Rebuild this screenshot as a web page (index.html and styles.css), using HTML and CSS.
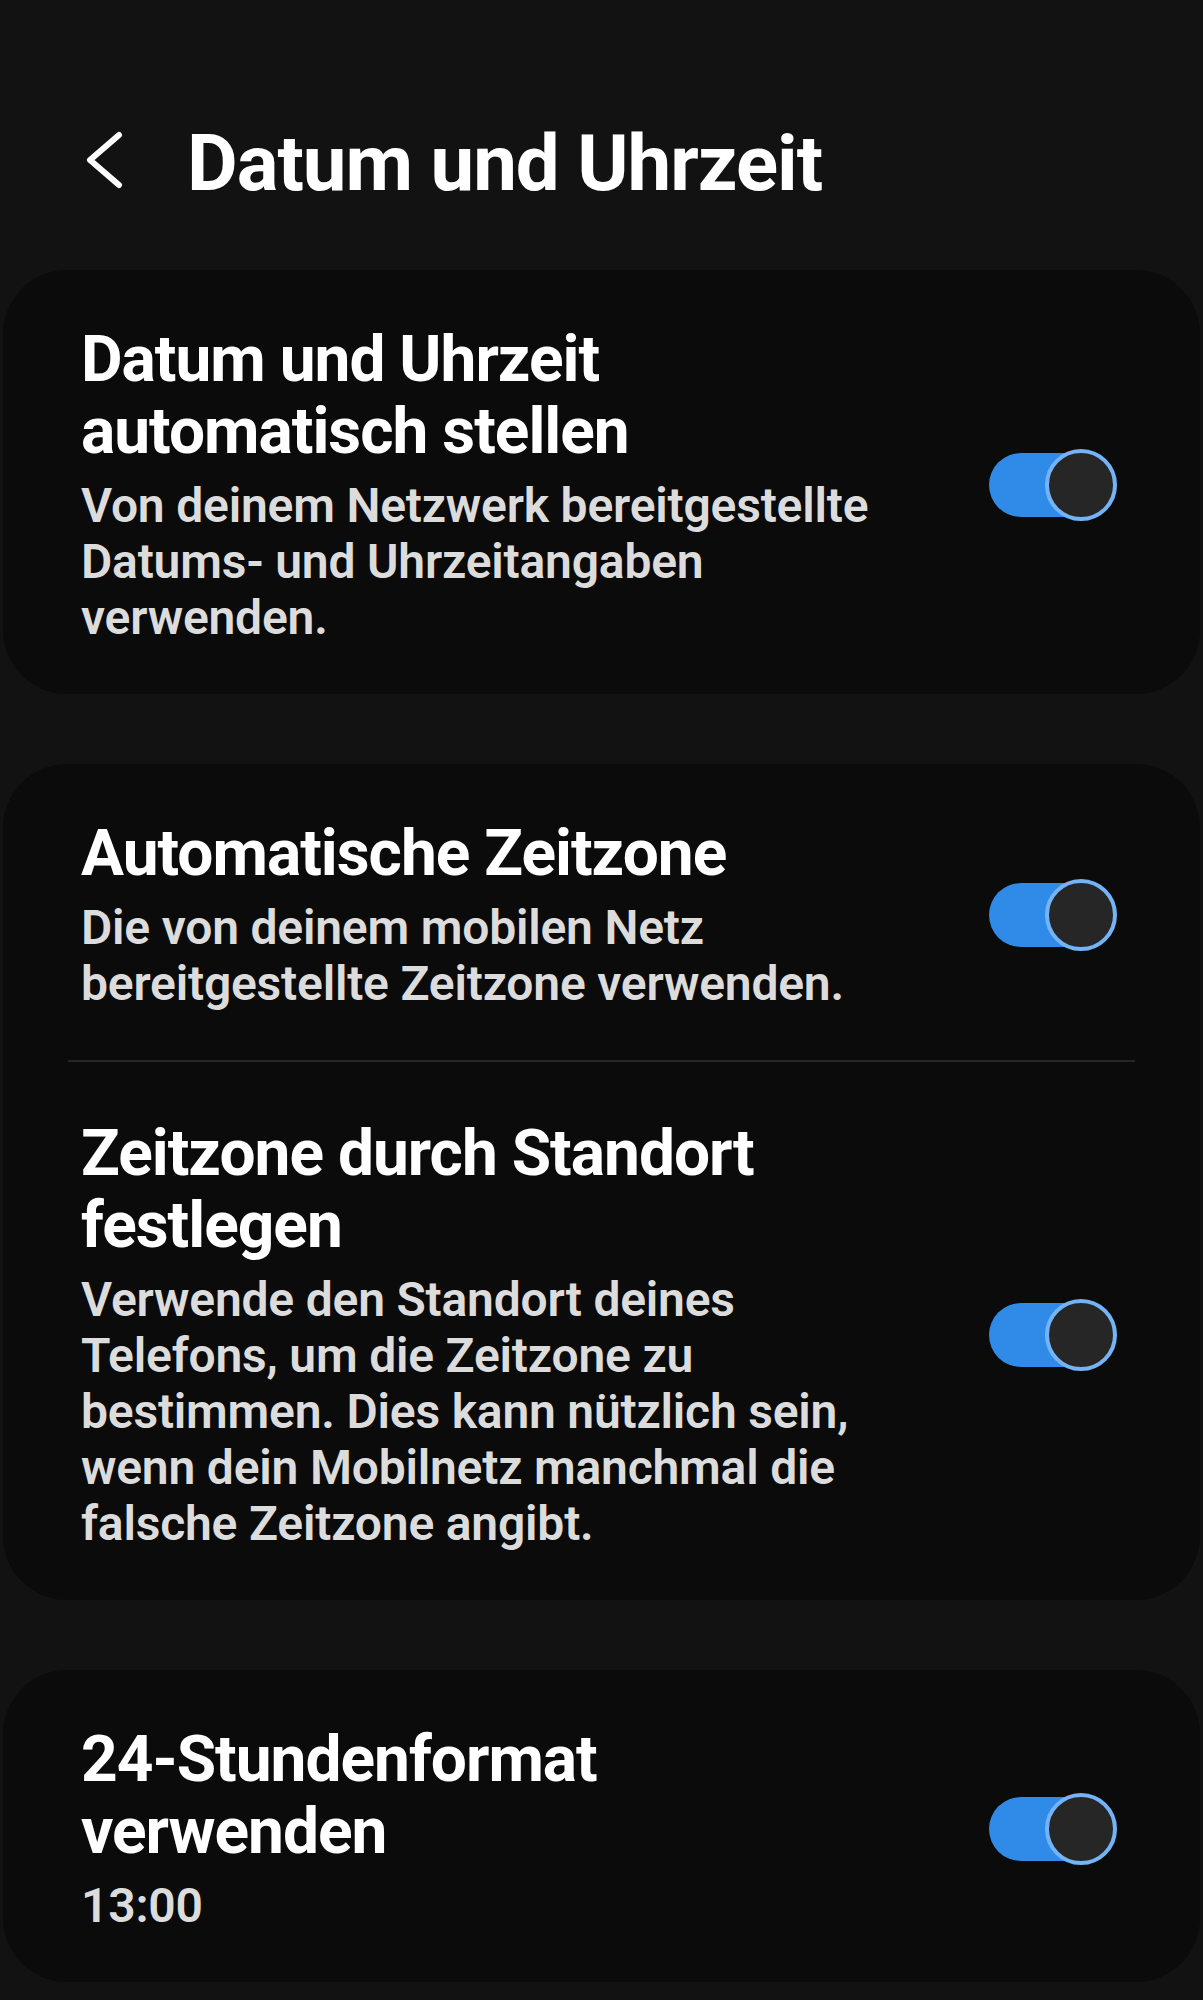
FILE: index.html
```html
<!DOCTYPE html>
<html lang="de">
<head>
  <meta charset="UTF-8">
  <meta name="viewport" content="width=device-width, initial-scale=1.0">
  <title>Datum und Uhrzeit</title>
  <link rel="stylesheet" href="styles.css">
</head>
<body>
  <header class="topbar">
    <svg class="back" viewBox="0 0 40 60" width="40" height="60">
      <path d="M34 5 L5 30 L34 55" fill="none" stroke="#fff" stroke-width="6" stroke-linecap="round" stroke-linejoin="round"/>
    </svg>
    <h1>Datum und Uhrzeit</h1>
  </header>

  <section class="card">
    <div class="row">
      <div class="text">
        <h2>Datum und Uhrzeit automatisch stellen</h2>
        <p>Von deinem Netzwerk bereitgestellte Datums- und Uhrzeitangaben verwenden.</p>
      </div>
      <span class="switch"><span class="knob"></span></span>
    </div>
  </section>

  <section class="card">
    <div class="row">
      <div class="text">
        <h2>Automatische Zeitzone</h2>
        <p>Die von deinem mobilen Netz bereitgestellte Zeitzone verwenden.</p>
      </div>
      <span class="switch"><span class="knob"></span></span>
    </div>
    <div class="divider"></div>
    <div class="row">
      <div class="text">
        <h2>Zeitzone durch Standort festlegen</h2>
        <p>Verwende den Standort deines Telefons, um die Zeitzone zu bestimmen. Dies kann nützlich sein, wenn dein Mobilnetz manchmal die falsche Zeitzone angibt.</p>
      </div>
      <span class="switch"><span class="knob"></span></span>
    </div>
  </section>

  <section class="card">
    <div class="row">
      <div class="text">
        <h2>24-Stundenformat verwenden</h2>
        <p>13:00</p>
      </div>
      <span class="switch"><span class="knob"></span></span>
    </div>
  </section>
</body>
</html>
```

FILE: styles.css
```css
body {
  margin: 0;
  background-color: #121212;
  color: #fff;
  font-family: Roboto, "Noto Sans", sans-serif;
}
.topbar {
  display: flex;
  align-items: flex-start;
  padding: 119px 0 0 85px;
  margin-bottom: 61px;
}
.back {
  margin-top: 11px;
  flex-shrink: 0;
}
.topbar h1 {
  margin: 0 0 0 62px;
  font-size: 78px;
  line-height: 90px;
  font-weight: 700;
  letter-spacing: -1px;
}
.card {
  background-color: #0b0b0b;
  margin: 0 3px 70px;
  border-radius: 64px;
}
.row {
  display: flex;
  align-items: center;
  padding: 54px 83px 48px 78px;
}
.divider + .row {
  padding-top: 56px;
}
.text {
  flex: 1;
  padding-right: 100px;
}
.text h2 {
  margin: 0 0 10px;
  font-size: 64px;
  line-height: 72px;
  font-weight: 700;
  letter-spacing: -1px;
}
.text p {
  margin: 0;
  font-size: 48px;
  line-height: 56px;
  font-weight: 600;
  color: #dcdcdc;
  letter-spacing: -0.2px;
}
.divider {
  height: 2px;
  background-color: #262626;
  margin: 0 65px;
}
.switch {
  position: relative;
  flex-shrink: 0;
  width: 128px;
  height: 72px;
}
.switch::before {
  content: "";
  position: absolute;
  left: 0;
  right: 4px;
  top: 4px;
  bottom: 4px;
  background-color: #2f8ae8;
  border-radius: 32px;
}
.knob {
  position: absolute;
  right: 0;
  top: 0;
  width: 64px;
  height: 64px;
  border: 4px solid #74b4f6;
  border-radius: 50%;
  background-color: #262626;
}
```
